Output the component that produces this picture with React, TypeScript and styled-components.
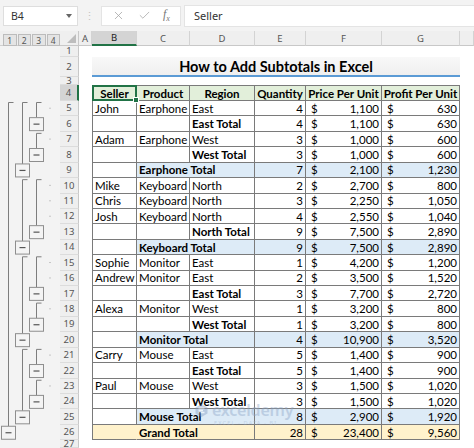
import React from "react";
import styled, { createGlobalStyle } from "styled-components";
import { X, Check } from "lucide-react";

const ROW_H = 15.43;

const GlobalStyle = createGlobalStyle`
  html, body {
    margin: 0;
    padding: 0;
    background: #f3f3f3;
    overflow: hidden;
  }
  body {
    font-family: "Lato", "Liberation Sans", sans-serif;
  }
`;

type Kind = "detail" | "sub" | "group" | "grand";

type Row = {
  seller?: string;
  product?: string;
  region?: string;
  qty: number;
  price: string;
  profit: string;
  kind: Kind;
};

const rows: Row[] = [
  { seller: "John", product: "Earphone", region: "East", qty: 4, price: "1,100", profit: "630", kind: "detail" },
  { region: "East Total", qty: 4, price: "1,100", profit: "630", kind: "sub" },
  { seller: "Adam", product: "Earphone", region: "West", qty: 3, price: "1,000", profit: "600", kind: "detail" },
  { region: "West Total", qty: 3, price: "1,000", profit: "600", kind: "sub" },
  { product: "Earphone Total", qty: 7, price: "2,100", profit: "1,230", kind: "group" },
  { seller: "Mike", product: "Keyboard", region: "North", qty: 2, price: "2,700", profit: "800", kind: "detail" },
  { seller: "Chris", product: "Keyboard", region: "North", qty: 3, price: "2,250", profit: "1,050", kind: "detail" },
  { seller: "Josh", product: "Keyboard", region: "North", qty: 4, price: "2,550", profit: "1,040", kind: "detail" },
  { region: "North Total", qty: 9, price: "7,500", profit: "2,890", kind: "sub" },
  { product: "Keyboard Total", qty: 9, price: "7,500", profit: "2,890", kind: "group" },
  { seller: "Sophie", product: "Monitor", region: "East", qty: 1, price: "4,200", profit: "1,200", kind: "detail" },
  { seller: "Andrew", product: "Monitor", region: "East", qty: 2, price: "3,500", profit: "1,520", kind: "detail" },
  { region: "East Total", qty: 3, price: "7,700", profit: "2,720", kind: "sub" },
  { seller: "Alexa", product: "Monitor", region: "West", qty: 1, price: "3,200", profit: "800", kind: "detail" },
  { region: "West Total", qty: 1, price: "3,200", profit: "800", kind: "sub" },
  { product: "Monitor Total", qty: 4, price: "10,900", profit: "3,520", kind: "group" },
  { seller: "Carry", product: "Mouse", region: "East", qty: 5, price: "1,400", profit: "900", kind: "detail" },
  { region: "East Total", qty: 5, price: "1,400", profit: "900", kind: "sub" },
  { seller: "Paul", product: "Mouse", region: "West", qty: 3, price: "1,500", profit: "1,020", kind: "detail" },
  { region: "West Total", qty: 3, price: "1,500", profit: "1,020", kind: "sub" },
  { product: "Mouse Total", qty: 8, price: "2,900", profit: "1,920", kind: "group" },
  { product: "Grand Total", qty: 28, price: "23,400", profit: "9,560", kind: "grand" },
];

// outline groups: [first detail row, summary row]
const outline: { x: number; groups: [number, number][] }[] = [
  { x: 8, groups: [[5, 26]] },
  { x: 22, groups: [[5, 9], [10, 14], [15, 20], [21, 25]] },
  { x: 36, groups: [[5, 6], [7, 8], [10, 13], [15, 17], [18, 19], [21, 22], [23, 24]] },
];
const detailRows = [5, 7, 10, 11, 12, 15, 16, 18, 21, 23];

const rowTop = (r: number) => 55 + (r - 5) * ROW_H;
const rowMid = (r: number) => rowTop(r) + ROW_H / 2;

const Wrapper = styled.div`
  position: relative;
  width: 474px;
  height: 448px;
  overflow: hidden;
  background: #f3f3f3;
`;

const FormulaBar = styled.div`
  display: flex;
  align-items: center;
  height: 31px;
  padding-left: 3px;
  box-sizing: border-box;
  font-family: "Noto Sans", "Open Sans", sans-serif;
`;

const NameBox = styled.div`
  display: flex;
  align-items: center;
  justify-content: space-between;
  width: 75px;
  height: 20px;
  padding: 0 5px 0 7px;
  box-sizing: border-box;
  background: #fff;
  border: 1px solid #dedede;
  font-size: 10.5px;
  color: #333;
`;

const Caret = styled.span`
  width: 0;
  height: 0;
  border-left: 3px solid transparent;
  border-right: 3px solid transparent;
  border-top: 4px solid #666;
`;

const Grip = styled.span`
  width: 23px;
  text-align: center;
  color: #c4c4c4;
  font-size: 11px;
`;

const FxBox = styled.div`
  display: flex;
  align-items: center;
  justify-content: space-around;
  width: 80px;
  height: 20px;
  padding: 0 4px;
  box-sizing: border-box;
  background: #fff;
  border: 1px solid #e4e4e4;
  color: #a3a3a3;
`;

const Fx = styled.span`
  font-family: "Liberation Serif", serif;
  font-style: italic;
  font-size: 12px;
  color: #777;
  sub {
    font-size: 8px;
  }
`;

const Input = styled.div`
  flex: 1;
  display: flex;
  align-items: center;
  height: 20px;
  margin-left: 3px;
  padding-left: 9px;
  background: #fff;
  border: 1px solid #e4e4e4;
  border-right: none;
  font-size: 11px;
  color: #333;
`;

const Sheet = styled.div`
  display: grid;
  grid-template-columns: 60px 19px 13px 45px 53px 65px 51px 76px 78px 1fr;
  grid-template-rows: 15px 11px 20px 8px 16px repeat(22, ${ROW_H}px) 1fr;
  height: 417px;
  background: #fff;
  font-size: 11.5px;
  color: #000;
`;

const LevelBar = styled.div`
  display: flex;
  gap: 1px;
  padding: 3px 0 0 3px;
  background: #efefef;
  border-bottom: 1px solid #d0d0d0;
`;

const LevelButton = styled.span`
  display: flex;
  align-items: center;
  justify-content: center;
  width: 12px;
  height: 10px;
  background: #e4e4e4;
  border: 1px solid #bcbcbc;
  font-family: "Noto Sans", sans-serif;
  font-size: 8.5px;
  color: #555;
`;

const Corner = styled.div`
  position: relative;
  background: #efefef;
  border-bottom: 1px solid #c8c8c8;
  border-right: 1px solid #c8c8c8;
  &::after {
    content: "";
    position: absolute;
    right: 2px;
    bottom: 2px;
    border-left: 9px solid transparent;
    border-bottom: 9px solid #bdbdbd;
  }
`;

const ColHead = styled.div<{ $active?: boolean }>`
  display: flex;
  align-items: center;
  justify-content: center;
  background: ${(p) => (p.$active ? "#d4d4d4" : "#efefef")};
  border-right: 1px solid #d3d3d3;
  border-bottom: ${(p) => (p.$active ? "2px solid #217346" : "1px solid #c8c8c8")};
  font-family: "Noto Sans", sans-serif;
  font-size: 9.5px;
  color: ${(p) => (p.$active ? "#222" : "#555")};
`;

const Gutter = styled.div`
  grid-column: 1;
  grid-row: 2 / -1;
  background: #f3f3f3;
  svg {
    display: block;
  }
`;

const RowNum = styled.div<{ $active?: boolean }>`
  display: flex;
  align-items: center;
  justify-content: center;
  overflow: hidden;
  background: ${(p) => (p.$active ? "#d4d4d4" : "#efefef")};
  border-bottom: 1px solid #dcdcdc;
  border-right: ${(p) => (p.$active ? "2px solid #217346" : "1px solid #c8c8c8")};
  box-sizing: border-box;
  font-family: "Noto Sans", sans-serif;
  font-size: 9.5px;
  line-height: 1;
  color: #555;
`;

const Blank = styled.div<{ $span?: number }>`
  grid-column: span ${(p) => p.$span ?? 1};
`;

const Title = styled.div`
  grid-column: span 6;
  display: flex;
  align-items: center;
  justify-content: center;
  background: linear-gradient(#f8f8f8, #efefef);
  border-bottom: 2px solid #5b9bd5;
  font-size: 14.5px;
  font-weight: 700;
`;

type Tone = "plain" | "head" | "blue" | "gold";

const fills: Record<Tone, string> = {
  plain: "#fff",
  head: "#e2efda",
  blue: "#ddebf7",
  gold: "#fff2cc",
};

const Cell = styled.div<{
  $tone?: Tone;
  $bold?: boolean;
  $align?: "left" | "center" | "right";
  $span?: number;
  $first?: boolean;
  $top?: boolean;
  $open?: boolean;
  $selected?: boolean;
}>`
  position: relative;
  grid-column: span ${(p) => p.$span ?? 1};
  display: flex;
  align-items: center;
  justify-content: ${(p) =>
    p.$align === "right" ? "flex-end" : p.$align === "center" ? "center" : "flex-start"};
  padding: 0 2px;
  white-space: nowrap;
  background: ${(p) => fills[p.$tone ?? "plain"]};
  border-right: 1px solid ${(p) => (p.$open ? "transparent" : "#7a7a7a")};
  border-bottom: 1px solid #7a7a7a;
  border-left: ${(p) => (p.$first ? "1px solid #7a7a7a" : "none")};
  border-top: ${(p) => (p.$top ? "1px solid #7a7a7a" : "none")};
  font-weight: ${(p) => (p.$bold ? 700 : 400)};
  ${(p) =>
    p.$selected &&
    `
    outline: 2px solid #217346;
    outline-offset: -2px;
    z-index: 2;
    &::after {
      content: "";
      position: absolute;
      right: -3px;
      bottom: -3px;
      width: 4px;
      height: 4px;
      background: #217346;
      border: 1px solid #fff;
    }
  `}
`;

const Money = styled(Cell)`
  justify-content: space-between;
  padding: 0 2px 0 5px;
`;

const Watermark = styled.div`
  position: absolute;
  left: 194px;
  top: 401px;
  display: flex;
  flex-direction: column;
  align-items: flex-start;
  opacity: 0.4;
  pointer-events: none;
`;

const MarkRow = styled.div`
  display: flex;
  align-items: center;
  gap: 3px;
`;

const MarkName = styled.span`
  font-family: "Noto Sans", sans-serif;
  font-size: 16px;
  font-weight: 600;
  line-height: 18px;
  color: #8aa2c4;
  letter-spacing: -0.2px;
`;

const MarkTag = styled.span`
  margin-left: 20px;
  font-family: "Noto Sans", sans-serif;
  font-size: 5.5px;
  line-height: 8px;
  letter-spacing: 1.2px;
  color: #9aaecb;
`;

const OutlineDrawing = () => (
  <svg width={60} height={402}>
    {outline.map((lvl) =>
      lvl.groups.map(([a, s]) => {
        const top = rowTop(a) + 1.5;
        const btnTop = rowMid(s) - 6.5;
        return (
          <g key={`${lvl.x}-${a}`}>
            <path
              d={`M${lvl.x + 5.5} ${top} H${lvl.x + 0.5} V${btnTop}`}
              fill="none"
              stroke="#7d7d7d"
              strokeWidth={1}
            />
            <rect
              x={lvl.x - 6.5}
              y={btnTop}
              width={14}
              height={13}
              fill="#f4f4f4"
              stroke="#8e8e8e"
              strokeWidth={1}
            />
            <line
              x1={lvl.x - 2.5}
              x2={lvl.x + 3.5}
              y1={rowMid(s)}
              y2={rowMid(s)}
              stroke="#555"
              strokeWidth={1.2}
            />
          </g>
        );
      })
    )}
    {detailRows.map((r) => (
      <rect key={r} x={49.5} y={rowMid(r) - 1} width={1} height={1} fill="#9a9a9a" />
    ))}
  </svg>
);

const App = () => {
  const headers = ["Seller", "Product", "Region", "Quantity", "Price Per Unit", "Profit Per Unit"];

  return (
    <Wrapper>
      <GlobalStyle />
      <FormulaBar>
        <NameBox>
          B4
          <Caret />
        </NameBox>
        <Grip>⋮</Grip>
        <FxBox>
          <X size={13} strokeWidth={1.4} />
          <Check size={13} strokeWidth={1.4} />
          <Fx>
            f<sub>x</sub>
          </Fx>
        </FxBox>
        <Input>Seller</Input>
      </FormulaBar>

      <Sheet>
        <LevelBar>
          {[1, 2, 3, 4].map((n) => (
            <LevelButton key={n}>{n}</LevelButton>
          ))}
        </LevelBar>
        <Corner />
        {["A", "B", "C", "D", "E", "F", "G", ""].map((c, i) => (
          <ColHead key={i} $active={c === "B"}>
            {c}
          </ColHead>
        ))}

        <Gutter>
          <OutlineDrawing />
        </Gutter>

        <RowNum>1</RowNum>
        <Blank $span={8} />

        <RowNum>2</RowNum>
        <Blank />
        <Title>How to Add Subtotals in Excel</Title>
        <Blank />

        <RowNum>3</RowNum>
        <Blank $span={8} />

        <RowNum $active>4</RowNum>
        <Blank />
        {headers.map((h, i) => (
          <Cell key={h} $tone="head" $bold $align="center" $top $first={i === 0} $selected={i === 0}>
            {h}
          </Cell>
        ))}
        <Blank />

        {rows.map((r, i) => {
          const n = i + 5;
          const tone: Tone = r.kind === "group" ? "blue" : r.kind === "grand" ? "gold" : "plain";
          const total = r.kind === "group" || r.kind === "grand";
          return (
            <React.Fragment key={n}>
              <RowNum>{n}</RowNum>
              <Blank />
              <Cell $first $tone={r.kind === "grand" ? "gold" : "plain"} $open={r.kind === "grand"}>
                {r.seller}
              </Cell>
              {total ? (
                <Cell $span={2} $tone={tone} $bold>
                  {r.product}
                </Cell>
              ) : (
                <>
                  <Cell>{r.product}</Cell>
                  <Cell $bold={r.kind === "sub"}>{r.region}</Cell>
                </>
              )}
              <Cell $tone={tone} $align="right">
                {r.qty}
              </Cell>
              <Money $tone={tone}>
                <span>$</span>
                <span>{r.price}</span>
              </Money>
              <Money $tone={tone}>
                <span>$</span>
                <span>{r.profit}</span>
              </Money>
              <Blank />
            </React.Fragment>
          );
        })}

        <RowNum>27</RowNum>
        <Blank $span={8} />
      </Sheet>

      <Watermark>
        <MarkRow>
          <svg width={15} height={15} viewBox="0 0 15 15">
            <path d="M7.5 1 L13.5 4.5 V10.5 L7.5 14 L1.5 10.5 V4.5 Z" fill="#7d98c0" />
            <path d="M4.5 5.5 H10.5 M4.5 7.5 H9 M4.5 9.5 H10.5" stroke="#fff" strokeWidth={1.3} />
          </svg>
          <MarkName>exceldemy</MarkName>
        </MarkRow>
        <MarkTag>EXCEL · DATA · BI</MarkTag>
      </Watermark>
    </Wrapper>
  );
};

export default App;
